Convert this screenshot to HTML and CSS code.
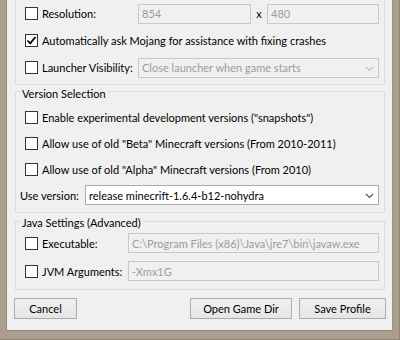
FILE: index.html
```html
<!DOCTYPE html>
<html lang="en">
<head>
    <meta charset="UTF-8">
    <title>Profile Editor</title>
    <link rel="stylesheet" href="styles.css">
</head>
<body>

<div class="dialog">
    <div class="group group-top">
        <div class="row">
            <label class="check check-wide"><span class="box"></span>Resolution:</label>
            <div class="field field-res">854</div>
            <span class="times">x</span>
            <div class="field field-res2">480</div>
        </div>
        <div class="row">
            <label class="check"><span class="box checked"><svg width="11" height="11" viewBox="0 0 11 11"><path d="M1.5 5.5 L4.2 8.3 L9.5 2" fill="none" stroke="#000" stroke-width="1.8"/></svg></span>Automatically ask Mojang for assistance with fixing crashes</label>
        </div>
        <div class="row">
            <label class="check check-wide"><span class="box"></span>Launcher Visibility:</label>
            <div class="field field-grow">Close launcher when game starts
                <svg class="chevron" width="9" height="6" viewBox="0 0 9 6"><path d="M1 1 L4.5 4.5 L8 1" fill="none" stroke="#c4c4c4" stroke-width="1.2"/></svg>
            </div>
        </div>
    </div>

    <div class="group group-versions">
        <span class="legend">Version Selection</span>
        <div class="row row-26">
            <label class="check"><span class="box"></span>Enable experimental development versions ("snapshots")</label>
        </div>
        <div class="row row-26">
            <label class="check"><span class="box"></span>Allow use of old "Beta" Minecraft versions (From 2010-2011)</label>
        </div>
        <div class="row row-26">
            <label class="check"><span class="box"></span>Allow use of old "Alpha" Minecraft versions (From 2010)</label>
        </div>
        <div class="row row-26">
            <label class="plain-label">Use version:</label>
            <div class="field field-grow field-on">release minecrift-1.6.4-b12-nohydra
                <svg class="chevron" width="9" height="6" viewBox="0 0 9 6"><path d="M1 1 L4.5 4.5 L8 1" fill="none" stroke="#555" stroke-width="1.2"/></svg>
            </div>
        </div>
    </div>

    <div class="group group-java">
        <span class="legend legend-java">Java Settings (Advanced)</span>
        <div class="row row-28">
            <label class="check check-mid"><span class="box"></span>Executable:</label>
            <div class="field field-grow">C:\Program Files (x86)\Java\jre7\bin\javaw.exe</div>
        </div>
        <div class="row row-28">
            <label class="check check-mid"><span class="box"></span>JVM Arguments:</label>
            <div class="field field-grow">-Xmx1G</div>
        </div>
    </div>

    <div class="buttons">
        <button class="btn btn-cancel">Cancel</button>
        <span class="spacer"></span>
        <button class="btn btn-open">Open Game Dir</button>
        <button class="btn btn-save">Save Profile</button>
    </div>
</div>

</body>
</html>
```

FILE: styles.css
```css
body {
    margin: 0;
    background-color: #ab9e8f;
    font-family: Lato, "Segoe UI", "Liberation Sans", sans-serif;
    font-size: 11px;
    color: #000;
    width: 400px;
    height: 340px;
    box-shadow: inset -1px -1px 0 #8f8376;
}

.dialog {
    width: 385px;
    height: 330px;
    margin-left: 7px;
    background: #f0f0f0;
    box-shadow: -1px 0 0 #938778, 1px 0 0 #9a8e80, 0 1px 0 #938778;
    display: flex;
    flex-direction: column;
}

.group {
    margin: 0 7px 0 8px;
    border: 1px solid #dcdcdc;
    padding: 0 5px 4px 9px;
    display: flex;
    flex-direction: column;
}

.group-top {
    border-top: none;
    padding-bottom: 3px;
}

.group-versions {
    margin-top: 6px;
}

.group-java {
    margin-top: 8px;
}

.legend {
    align-self: flex-start;
    margin: -5px 0 3px -5px;
    padding: 0 2px;
    line-height: 14px;
    background: #f0f0f0;
}

.legend-java {
    margin-top: -6px;
    margin-bottom: -1px;
}

.row {
    display: flex;
    align-items: center;
    height: 27px;
}

.row-26 {
    height: 26px;
}

.row-28 {
    height: 28px;
}

.check {
    display: flex;
    align-items: center;
    white-space: nowrap;
}

.check-wide {
    width: 113px;
    flex: none;
}

.check-mid {
    width: 103px;
    flex: none;
}

.plain-label {
    width: 65px;
    margin-left: -5px;
    flex: none;
}

.box {
    width: 13px;
    height: 13px;
    box-sizing: border-box;
    border: 1px solid #333;
    background: #fff;
    margin-right: 4px;
    flex: none;
    display: flex;
    align-items: center;
    justify-content: center;
}

.field {
    height: 20px;
    box-sizing: border-box;
    border: 1px solid #c9c9c9;
    background: #f0f0f0;
    color: #9c9c9c;
    padding: 0 4px 0 3px;
    display: flex;
    align-items: center;
    white-space: nowrap;
    overflow: hidden;
}

.field-res {
    width: 113px;
}

.field-res2 {
    width: 112px;
}

.field-grow {
    flex: 1;
}

.field-on {
    background: #fff;
    border-color: #acacac;
    color: #000;
}

.chevron {
    margin-left: auto;
    margin-top: 2px;
}

.times {
    width: 16px;
    text-align: center;
}

.buttons {
    display: flex;
    gap: 7px;
    margin-top: 8px;
    padding: 0 6px 0 7px;
}

.spacer {
    flex: 1;
}

.btn {
    height: 21px;
    box-sizing: border-box;
    border: 1px solid #acacac;
    background: linear-gradient(#f0f0f0, #e5e5e5);
    font: inherit;
    color: #000;
    padding: 0;
    cursor: pointer;
}

.btn-cancel {
    width: 63px;
}

.btn-open {
    width: 102px;
}

.btn-save {
    width: 87px;
}
```
